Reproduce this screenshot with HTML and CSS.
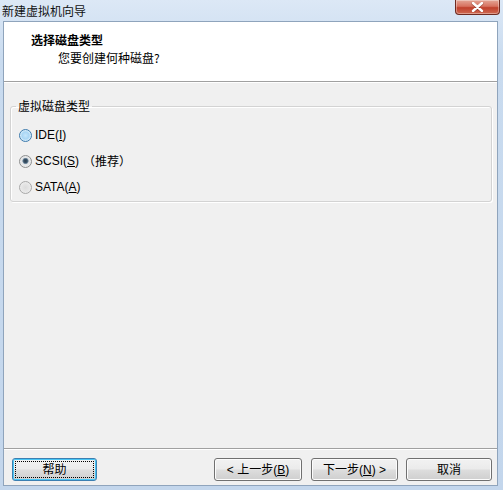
FILE: index.html
```html
<!DOCTYPE html>
<html lang="zh-CN">
<head>
<meta charset="utf-8">
<title>新建虚拟机向导</title>
<link rel="stylesheet" href="styles.css">
</head>
<body>
<div class="window">
  <div class="titlebar">
    <span class="title">新建虚拟机向导</span>
    <span class="close"><svg width="13" height="10" viewBox="0 0 13 10"><path d="M2 1 L11 9 M11 1 L2 9" stroke="#5a1a12" stroke-width="3" stroke-linecap="round" transform="translate(0 0.6)" opacity="0.45"/><path d="M2 1 L11 9 M11 1 L2 9" stroke="#fff" stroke-width="2.4" stroke-linecap="round"/></svg></span>
  </div>
  <div class="client">
    <div class="header">
      <div class="head-title">选择磁盘类型</div>
      <div class="head-sub">您要创建何种磁盘?</div>
    </div>
    <div class="content">
      <fieldset class="group">
        <legend class="group-label">虚拟磁盘类型</legend>
        <div class="row"><span class="radio radio-hover"></span><span class="lbl">IDE(<u>I</u>)</span></div>
        <div class="row"><span class="radio radio-checked"></span><span class="lbl">SCSI(<u>S</u>)</span><span class="note">（推荐）</span></div>
        <div class="row"><span class="radio radio-off"></span><span class="lbl">SATA(<u>A</u>)</span></div>
      </fieldset>
    </div>
    <div class="footer">
      <button class="btn btn-help"><span class="focus">帮助</span></button>
      <div class="nav">
        <button class="btn btn-back">&lt; 上一步(<u>B</u>)</button>
        <button class="btn btn-next">下一步(<u>N</u>) &gt;</button>
        <button class="btn btn-cancel">取消</button>
      </div>
    </div>
  </div>
</div>
</body>
</html>
```
FILE: styles.css
```css
html, body {
  margin: 0;
  padding: 0;
}
body {
  width: 503px;
  height: 490px;
  overflow: hidden;
  font-family: "Liberation Sans", "Noto Sans CJK SC", sans-serif;
  font-size: 12px;
  color: #000;
  background: linear-gradient(to bottom, #dce8f6 0px, #c9dbef 60px, #c3d6ec 100%);
}
.window {
  height: 490px;
  display: flex;
  flex-direction: column;
}
.titlebar {
  height: 21px;
  display: flex;
  align-items: flex-start;
  flex: none;
}
.title {
  padding: 4px 0 0 2px;
  line-height: 14px;
  font-family: "Noto Sans CJK SC", sans-serif;
  color: #111;
}
.close {
  margin-left: auto;
  margin-right: 3px;
  width: 43px;
  height: 14px;
  border: 1px solid #6e2a20;
  border-top: none;
  border-radius: 0 0 4px 4px;
  background: linear-gradient(to bottom, #e4a696 0%, #d7715f 45%, #c0402c 55%, #cf6a52 100%);
  box-shadow: inset 0 0 0 1px rgba(255,255,255,0.35);
  display: flex;
  align-items: center;
  justify-content: center;
}
.client {
  flex: 1;
  margin: 0 5px 4px 3px;
  border: 1px solid #8fa4bc;
  background: #f0f0f0;
  display: flex;
  flex-direction: column;
}
.header {
  height: 48px;
  background: #fff;
  border-bottom: 1px solid #a0a0a0;
  box-shadow: 0 1px 0 #fff;
  padding: 11px 0 0 27px;
  flex: none;
}
.head-title {
  font-family: "Noto Sans CJK SC", sans-serif;
  font-weight: bold;
  line-height: 14px;
}
.head-sub {
  font-family: "Noto Sans CJK SC", sans-serif;
  line-height: 14px;
  margin: 4px 0 0 27px;
}
.content {
  flex: 1;
  padding: 17px 5px 0 6px;
}
.group {
  margin: 0;
  padding: 0 0 1px 5px;
  border: 1px solid #d3d3d3;
  border-radius: 3px;
  box-shadow: 1px 1px 0 #fff, inset 1px 1px 0 #fff;
  min-width: 0;
}
.group-label {
  padding: 0 2px;
  line-height: 14px;
  font-family: "Noto Sans CJK SC", sans-serif;
}
.group > .row:first-of-type {
  margin-top: 9px;
}
.row {
  height: 26px;
  display: flex;
  align-items: center;
}
.radio {
  width: 11px;
  height: 11px;
  border-radius: 50%;
  margin-left: 3px;
  margin-right: 3px;
  flex: none;
}
.radio-hover {
  border: 1px solid #3d7bad;
  background: radial-gradient(circle at 50% 50%, #c6e6fb 0%, #a9d6f5 45%, #e3f3fd 75%, #f5fbff 100%);
}
.radio-checked {
  border: 1px solid #8e8f8f;
  background: radial-gradient(circle at 50% 45%, #2c3e4e 0%, #3a5368 22%, #7c93a6 34%, #e2e4e6 42%, #f4f4f4 100%);
}
.radio-off {
  border: 1px solid #a8a8a8;
  background: radial-gradient(circle at 50% 50%, #dcdcdc 0%, #e6e6e6 50%, #f7f7f7 100%);
}
.lbl {
  line-height: 14px;
}
.note {
  font-family: "Noto Sans CJK SC", sans-serif;
  margin-left: 4px;
  line-height: 14px;
}
.footer {
  flex: none;
  border-top: 1px solid #a0a0a0;
  box-shadow: inset 0 1px 0 #fff;
  padding: 9px 5px 4px 8px;
  display: flex;
  align-items: center;
}
.nav {
  margin-left: auto;
  display: flex;
  gap: 8px;
}
.btn {
  height: 23px;
  padding: 0;
  margin: 0;
  font-family: "Liberation Sans", "Noto Sans CJK SC", sans-serif;
  font-size: 12px;
  color: #000;
  border: 1px solid #707070;
  border-radius: 3px;
  background: linear-gradient(to bottom, #f2f2f2 0%, #ebebeb 48%, #dddddd 52%, #cfcfcf 100%);
  box-shadow: inset 0 0 0 1px #fcfcfc;
  display: flex;
  align-items: center;
  justify-content: center;
  line-height: 14px;
}
.btn-help {
  width: 85px;
  border-color: #3c7fb1;
  background: linear-gradient(to bottom, #eaf6fd 0%, #d9effc 48%, #bee6fd 52%, #a7d9f5 100%);
  background: linear-gradient(to bottom, #f2f2f2 0%, #ebebeb 48%, #dddddd 52%, #cfcfcf 100%);
  box-shadow: inset 0 0 0 1px #48c6f5;
  padding: 2px;
}
.focus {
  flex: 1;
  align-self: stretch;
  border: 1px dotted #000;
  display: flex;
  align-items: center;
  justify-content: center;
}
.btn-back { width: 88px; }
.btn-next { width: 87px; }
.btn-cancel { width: 86px; }
.nav .btn-next { margin-right: 0; }
.nav .btn-back { margin-right: 1px; }
```
